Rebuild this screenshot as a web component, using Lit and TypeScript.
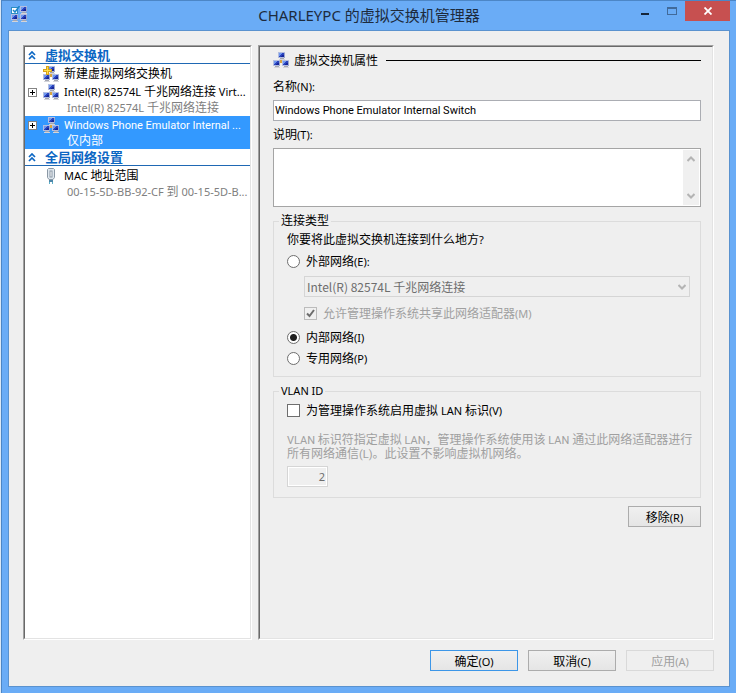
import { LitElement, html, css, svg, nothing } from "lit";
import { customElement, property } from "lit/decorators.js";
import { classMap } from "lit/directives/class-map.js";

const latinRun = /([\x20-\x7e]+)/;

/** Splits mixed text so Latin runs are set one step smaller than the ideographs. */
const mixed = (text: string) =>
  text
    .split(latinRun)
    .filter((part) => part !== "")
    .map((part) => (latinRun.test(part) ? html`<span class="latin">${part}</span>` : part));

const shared = css`
  * {
    box-sizing: border-box;
  }
  .latin {
    font-size: 11px;
    line-height: 1;
    white-space: pre;
  }
  .name .latin {
    font-family: Roboto, "Noto Sans CJK SC", sans-serif;
  }
  svg {
    display: block;
    flex: none;
  }
  button,
  input,
  select,
  textarea {
    font: inherit;
    color: inherit;
    margin: 0;
  }
`;

const monitor = (x: number, y: number) => svg`
  <g transform="translate(${x} ${y})">
    <rect x="0" y="0" width="7" height="6" fill="#b4bedf"></rect>
    <rect x="1" y="1" width="5" height="4" fill="#2a43bd"></rect>
    <path d="M1 1h3v1h-1v1h-1v1h-1z" fill="#6f97ee"></path>
    <path d="M4 3h2v2h-3v-1h1z" fill="#16279a"></path>
    <path d="M6 1h1v5h-1z" fill="#9ba6cc"></path>
    <rect x="2" y="6" width="4" height="1" fill="#a4a6b0"></rect>
    <rect x="1" y="7" width="6" height="1" fill="#d3d4da"></rect>
  </g>`;

const networkIcon = (plus = false) => html`
  <svg width="16" height="16" viewBox="0 0 16 16" aria-hidden="true">
    <path d="M8 8v3M6 10.500h4" stroke="#b0a890" fill="none"></path>
    <rect x="7" y="8" width="2" height="3" fill="#d9a441"></rect>
    ${monitor(5, 0)} ${monitor(0, 8)} ${monitor(9, 8)}
    ${plus
      ? svg`<path d="M3 0h3v3h3v3h-3v3h-3v-3h-3v-3h3z" fill="#d8a21a"></path>
          <path d="M4 1h1v3h3v1h-3v3h-1v-3h-3v-1h3z" fill="#ffe14d"></path>`
      : nothing}
  </svg>
`;

const adapterIcon = html`
  <svg width="16" height="16" viewBox="0 0 16 16" aria-hidden="true">
    <path d="M5.500 0.500h5l1 1v8l-1.500 2h-4l-1.500-2v-8z" fill="#dfe7ee" stroke="#8b98a5"></path>
    <rect x="7" y="3" width="2" height="6" fill="#fff" stroke="#8b98a5"></rect>
    <rect x="6" y="12" width="4" height="2" fill="#4d86a8"></rect>
    <path d="M6.500 14v2M9.500 14v2" stroke="#5fb0c8"></path>
  </svg>
`;

const appIcon = html`
  <svg width="16" height="16" viewBox="0 0 16 16" aria-hidden="true">
    <path d="M7 12.500h3M12.500 7v2" stroke="#8fa3c4" fill="none"></path>
    ${monitor(9, 0)} ${monitor(0, 8)} ${monitor(9, 8)}
    <rect x="0.500" y="1.500" width="6" height="6" fill="#fff" stroke="#2d8fc4"></rect>
    <path d="M2 4l2 2 4.500-6" stroke="#1c86c8" stroke-width="1.500" fill="none"></path>
  </svg>
`;

interface TreeItem {
  icon: unknown;
  label: string;
  detail?: string;
  expandable?: boolean;
  selected?: boolean;
}

interface TreeSection {
  title: string;
  items: TreeItem[];
}

const sections: TreeSection[] = [
  {
    title: "虚拟交换机",
    items: [
      { icon: networkIcon(true), label: "新建虚拟网络交换机" },
      {
        icon: networkIcon(),
        label: "Intel(R) 82574L 千兆网络连接 Virt...",
        detail: "Intel(R) 82574L 千兆网络连接",
        expandable: true,
      },
      {
        icon: networkIcon(),
        label: "Windows Phone Emulator Internal ...",
        detail: "仅内部",
        expandable: true,
        selected: true,
      },
    ],
  },
  {
    title: "全局网络设置",
    items: [
      {
        icon: adapterIcon,
        label: "MAC 地址范围",
        detail: "00-15-5D-BB-92-CF 到 00-15-5D-B...",
      },
    ],
  },
];

@customElement("switch-tree")
class SwitchTree extends LitElement {
  @property({ attribute: false }) sections: TreeSection[] = [];

  static styles = [
    shared,
    css`
      :host {
        display: block;
        background: #fff;
        overflow: hidden;
      }
      .heading {
        display: flex;
        align-items: center;
        height: 17px;
        margin: 0 0 1px;
        padding-left: 3px;
        border-bottom: 1px solid #1f68b4;
        font-size: 13px;
        line-height: 16px;
        font-weight: 700;
        color: #0b66c3;
      }
      .fold {
        display: flex;
        width: 17px;
        padding: 0;
        border: 0;
        background: none;
      }
      .items {
        list-style: none;
        margin: 0;
        padding: 0;
      }
      .item {
        display: flex;
        padding: 1px 0 1px 3px;
      }
      .item.selected {
        background: #3399ff;
        color: #fff;
      }
      .toggle {
        width: 15px;
        padding-top: 4px;
        flex: none;
      }
      .expander {
        display: block;
        padding: 0;
        border: 0;
        background: none;
      }
      .text {
        padding-left: 5px;
        line-height: 16px;
        white-space: nowrap;
        min-width: 0;
      }
      .detail {
        padding-left: 3px;
        line-height: 15px;
        color: #808080;
      }
      .selected .detail {
        color: #fff;
      }
    `,
  ];

  render() {
    return this.sections.map(
      (section) => html`
        <h2 class="heading">
          <button class="fold" aria-label="折叠">
            <svg width="8" height="9" viewBox="0 0 8 9">
              <path
                d="M1 4l3-3 3 3M1 8l3-3 3 3"
                fill="none"
                stroke="#0b66c3"
                stroke-width="1.700"
              ></path>
            </svg>
          </button>
          ${section.title}
        </h2>
        <ul class="items">
          ${section.items.map(
            (item) => html`
              <li class=${classMap({ item: true, selected: !!item.selected })}>
                <div class="toggle">
                  ${item.expandable
                    ? html`<button class="expander" aria-label="展开">
                        <svg width="9" height="9" viewBox="0 0 9 9">
                          <rect x="0.500" y="0.500" width="8" height="8" fill="#fff" stroke="#848484"></rect>
                          <path d="M2 4.500h5M4.500 2v5" stroke="#000"></path>
                        </svg>
                      </button>`
                    : nothing}
                </div>
                ${item.icon}
                <div class="text">
                  <div class=${classMap({ name: !!item.selected })}>${mixed(item.label)}</div>
                  ${item.detail ? html`<div class="detail">${mixed(item.detail)}</div>` : nothing}
                </div>
              </li>
            `,
          )}
        </ul>
      `,
    );
  }
}

const chevron = (up: boolean) => html`
  <svg width="8" height="6" viewBox="0 0 8 6" aria-hidden="true">
    <path
      d=${up ? "M0.500 5l3.500-3.500 3.500 3.500" : "M0.500 1l3.500 3.500 3.500-3.500"}
      fill="none"
      stroke="#b4b4b4"
      stroke-width="2"
    ></path>
  </svg>
`;

@customElement("switch-properties")
class SwitchProperties extends LitElement {
  static styles = [
    shared,
    css`
      :host {
        display: block;
        padding: 0 11px 0 13px;
      }
      .title {
        display: flex;
        align-items: center;
        height: 26px;
        margin: 0 0 6px;
        font-size: 12px;
        font-weight: 400;
      }
      .title span {
        padding: 0 8px 0 5px;
      }
      .rule {
        flex: 1;
        border-top: 1px solid #000;
      }
      .caption {
        display: block;
        line-height: 16px;
        margin-bottom: 5px;
      }
      .field {
        display: block;
        width: 100%;
        height: 21px;
        padding: 0 1px;
        border: 1px solid #abadb3;
        border-radius: 0;
        background: #fff;
        font-family: Roboto, "Noto Sans CJK SC", sans-serif;
        font-size: 11px;
        margin-bottom: 6px;
      }
      .memo {
        display: flex;
        height: 59px;
        border: 1px solid #a5a5a5;
        background: #fff;
        margin-bottom: 6px;
        padding: 1px;
      }
      .memo textarea {
        flex: 1;
        min-width: 0;
        border: 0;
        padding: 2px;
        resize: none;
        background: none;
      }
      .scroll {
        display: flex;
        flex-direction: column;
        justify-content: space-between;
        align-items: center;
        width: 16px;
        padding: 6px 0;
        background: #f0f0f0;
      }
      .group {
        margin: 0 0 6px;
        padding: 0 10px 10px 13px;
        border: 1px solid #dcdcdc;
        min-width: 0;
      }
      .group legend {
        margin-left: -8px;
        padding: 0 2px;
        line-height: 16px;
      }
      .question {
        margin: 3px 0 5px;
        line-height: 16px;
      }
      .option {
        display: flex;
        align-items: center;
        gap: 6px;
        height: 16px;
        white-space: nowrap;
      }
      .option + .option {
        margin-top: 5px;
      }
      .option input {
        appearance: none;
        width: 13px;
        height: 13px;
        border: 1px solid #6e6e6e;
        background: #fff;
      }
      .option input[type="radio"] {
        border-radius: 50%;
      }
      .option input[type="radio"]:checked {
        background: radial-gradient(circle, #1f1f1f 3px, #fff 4px);
      }
      .option input:disabled {
        border-color: #bcbcbc;
        background: #f0f0f0;
      }
      .tick {
        display: grid;
      }
      .tick > * {
        grid-area: 1 / 1;
      }
      .disabled {
        color: #a0a0a0;
      }
      .nested {
        margin: 7px 0 8px 17px;
      }
      .combo {
        display: grid;
        align-items: center;
        margin-bottom: 8px;
      }
      .combo > * {
        grid-area: 1 / 1;
      }
      .combo svg {
        justify-self: end;
        margin-right: 4px;
      }
      .combo select {
        appearance: none;
        width: 100%;
        height: 21px;
        padding: 0 2px;
        border: 1px solid #d5d5d5;
        border-radius: 0;
        background: #efefef;
        color: #6d6d6d;
        opacity: 1;
        font-family: "Noto Sans CJK SC", sans-serif;
      }
      .vlan {
        margin-bottom: 8px;
      }
      .vlan .option {
        margin-top: 3px;
      }
      .note {
        margin: 15px 0 5px;
        line-height: 14px;
        white-space: nowrap;
      }
      .number {
        display: block;
        width: 41px;
        height: 21px;
        padding: 0 2px;
        border: 1px solid #d5d5d5;
        box-shadow: inset 0 0 0 1px #fff;
        background: #efefef;
        color: #6d6d6d;
        font-size: 11px;
        text-align: right;
      }
      .remove {
        display: block;
        width: 73px;
        height: 21px;
        margin-left: auto;
        padding: 0;
        border: 1px solid #acacac;
        background: linear-gradient(#f0f0f0, #e5e5e5);
      }
    `,
  ];

  render() {
    return html`
      <h2 class="title">${networkIcon()}<span>虚拟交换机属性</span><i class="rule"></i></h2>

      <label class="caption" for="name">${mixed("名称(N):")}</label>
      <input class="field" id="name" .value=${"Windows Phone Emulator Internal Switch"} />

      <label class="caption" for="memo">${mixed("说明(T):")}</label>
      <div class="memo">
        <textarea id="memo"></textarea>
        <div class="scroll">${chevron(true)}${chevron(false)}</div>
      </div>

      <fieldset class="group">
        <legend>连接类型</legend>
        <p class="question">${mixed("你要将此虚拟交换机连接到什么地方?")}</p>
        <label class="option"><input type="radio" name="kind" />
          <span>${mixed("外部网络(E):")}</span></label>
        <div class="nested">
          <div class="combo">
            <select disabled aria-label="网络适配器">
              <option>Intel(R) 82574L 千兆网络连接</option>
            </select>
            ${chevron(false)}
          </div>
          <label class="option disabled">
            <span class="tick">
              <input type="checkbox" checked disabled />
              <svg width="13" height="13" viewBox="0 0 13 13">
                <path d="M3 6.500l2.500 2.500 4.500-6" fill="none" stroke="#6d6d6d" stroke-width="2"></path>
              </svg>
            </span>
            <span>${mixed("允许管理操作系统共享此网络适配器(M)")}</span>
          </label>
        </div>
        <label class="option"><input type="radio" name="kind" checked />
          <span>${mixed("内部网络(I)")}</span></label>
        <label class="option"><input type="radio" name="kind" />
          <span>${mixed("专用网络(P)")}</span></label>
      </fieldset>

      <fieldset class="group vlan">
        <legend>${mixed("VLAN ID")}</legend>
        <label class="option"><input type="checkbox" />
          <span>${mixed("为管理操作系统启用虚拟 LAN 标识(V)")}</span></label>
        <p class="note name disabled">
          ${mixed("VLAN 标识符指定虚拟 LAN，管理操作系统使用该 LAN 通过此网络适配器进行")}<br />${mixed(
            "所有网络通信(L)。此设置不影响虚拟机网络。",
          )}
        </p>
        <input class="number" aria-label="VLAN ID" disabled .value=${"2"} />
      </fieldset>

      <button class="remove">${mixed("移除(R)")}</button>
    `;
  }
}

@customElement("app-root")
class AppRoot extends LitElement {
  static styles = [
    shared,
    css`
      :host {
        display: flex;
        min-height: 100vh;
        box-sizing: border-box;
        border-left: 1px solid #dce8f5;
        font-family: "Noto Sans", "Noto Sans CJK SC", sans-serif;
        font-size: 12px;
        color: #000;
      }
      .window {
        flex: 1;
        display: flex;
        flex-direction: column;
        min-width: 0;
        padding: 0 6px 6px;
        border-left: 1px solid #4c86c6;
        border-top: 1px solid #4c86c6;
        background: #6aacf6;
      }
      .titlebar {
        display: grid;
        grid-template-columns: 1fr auto 1fr;
        height: 29px;
      }
      .app {
        padding: 5px 0 0 3px;
      }
      .caption {
        margin: 0;
        font-size: 15px;
        font-weight: 400;
        line-height: 29px;
        color: #1d2b3d;
        white-space: nowrap;
      }
      .caption .latin {
        font-size: 15px;
      }
      .controls {
        display: flex;
        justify-content: flex-end;
      }
      .control {
        display: flex;
        align-items: center;
        justify-content: center;
        width: 27px;
        height: 20px;
        padding: 0;
        border: 0;
        background: none;
      }
      .close {
        width: 45px;
        background: #c75050;
      }
      .client {
        flex: 1;
        display: flex;
        flex-direction: column;
        padding: 14px 15px 15px 14px;
        border: 1px solid #5a92cf;
        background: #efefef;
      }
      .panes {
        flex: 1;
        display: grid;
        grid-template-columns: 229px minmax(0, 1fr);
        gap: 6px;
      }
      .pane {
        border: 1px solid;
        border-color: #a0a0a0 #fff #fff #a0a0a0;
        display: grid;
        grid-template-columns: minmax(0, 1fr);
      }
      .inner {
        border: 1px solid;
        border-color: #696969 #e3e3e3 #e3e3e3 #696969;
      }
      .footer {
        display: flex;
        justify-content: flex-end;
        gap: 10px;
        margin-top: 10px;
      }
      .push {
        width: 88px;
        height: 21px;
        padding: 0;
        border: 1px solid #acacac;
        background: linear-gradient(#f0f0f0, #e5e5e5);
      }
      .default {
        border-color: #3c96e8;
      }
      .push:disabled {
        border-color: #d9d9d9;
        background: #efefef;
        color: #a0a0a0;
      }
    `,
  ];

  render() {
    return html`
      <div class="window">
        <header class="titlebar">
          <div class="app">${appIcon}</div>
          <h1 class="caption">${mixed("CHARLEYPC 的虚拟交换机管理器")}</h1>
          <div class="controls">
            <button class="control" aria-label="最小化">
              <svg width="10" height="10" viewBox="0 0 10 10">
                <rect x="1" y="7" width="8" height="2" fill="#15263a"></rect>
              </svg>
            </button>
            <button class="control" aria-label="最大化">
              <svg width="10" height="8" viewBox="0 0 10 8">
                <path d="M0 0h10v8h-10zM1 2v5h8v-5z" fill="#416a9a" fill-rule="evenodd"></path>
              </svg>
            </button>
            <button class="control close" aria-label="关闭">
              <svg width="8" height="8" viewBox="0 0 8 8">
                <path d="M0.500 0.500l7 7M7.500 0.500l-7 7" stroke="#fff" stroke-width="1.800"></path>
              </svg>
            </button>
          </div>
        </header>
        <main class="client">
          <div class="panes">
            <div class="pane"><switch-tree class="inner" .sections=${sections}></switch-tree></div>
            <div class="pane"><switch-properties class="inner"></switch-properties></div>
          </div>
          <footer class="footer">
            <button class="push default">${mixed("确定(O)")}</button>
            <button class="push">${mixed("取消(C)")}</button>
            <button class="push" disabled>${mixed("应用(A)")}</button>
          </footer>
        </main>
      </div>
    `;
  }
}
